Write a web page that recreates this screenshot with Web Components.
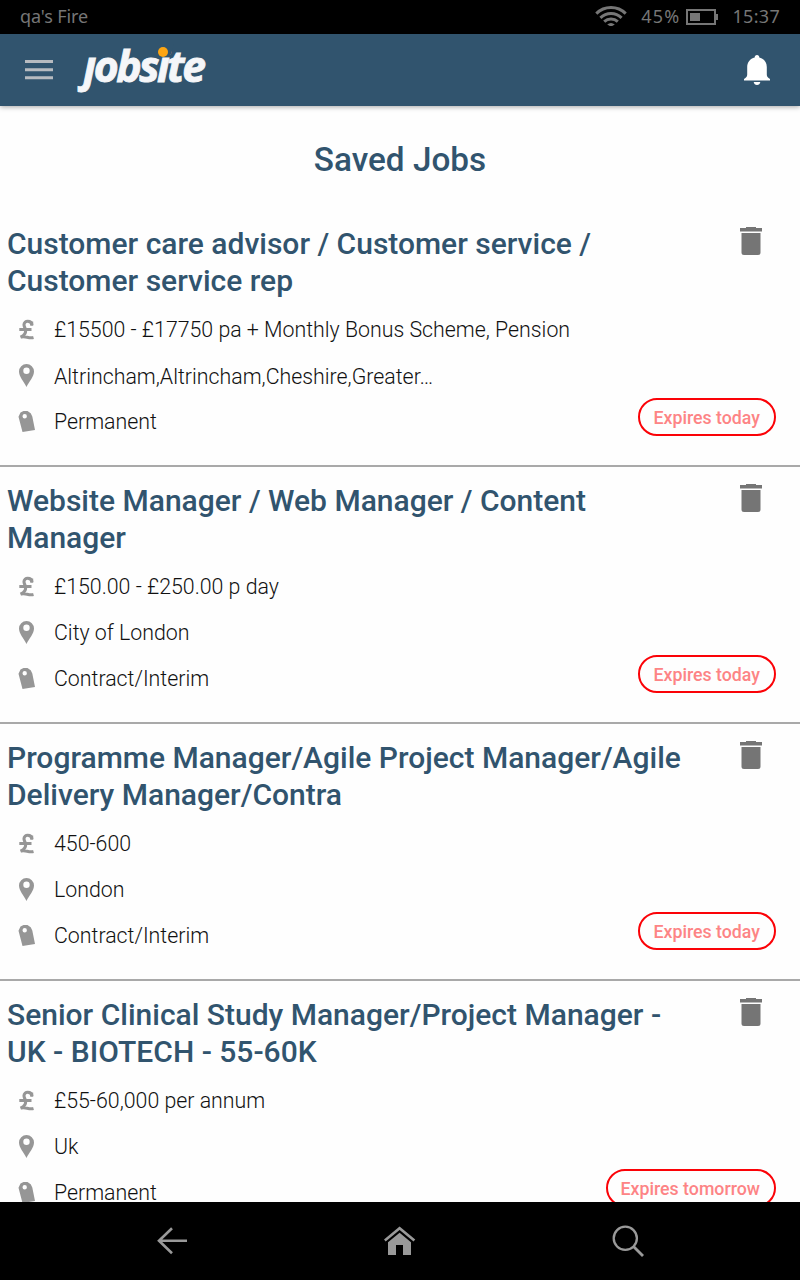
<!DOCTYPE html>
<html lang="en">
<head>
<meta charset="utf-8">
<title>Saved Jobs</title>
<style>
  html, body {
    margin: 0;
    height: 100%;
    overflow: hidden;
  }
  body {
    font-family: Roboto, "Liberation Sans", sans-serif;
    background: #fefefe;
    --brand: #31546e;
  }
</style>
</head>
<body>
<saved-jobs-app></saved-jobs-app>

<script>
class StatusBar extends HTMLElement {

  constructor () {
    super()
    this.shadow = this.attachShadow({ mode: 'open' })
  }

  connectedCallback () {
    this.render()
  }

  render () {
    this.shadow.innerHTML =
    /*html*/`
    <style>
      :host {
        display: flex;
        align-items: center;
        box-sizing: border-box;
        height: 34px;
        padding: 0 20px 2px 20px;
        background: #000;
        color: #767676;
        font: 18px/30px "Noto Sans", sans-serif;
      }
      .device { flex: 1; letter-spacing: -.1px; }
      .level { letter-spacing: 1.2px; }
      .clock { letter-spacing: .3px; }
      .battery { margin: 2px 14px 0 6px; }
      .wifi { margin-right: 14px; }
      svg { display: block; }
    </style>
    <span class="device"><slot></slot></span>
    <svg class="wifi" width="32" height="20" viewBox="0 0 32 20" fill="none" stroke="#767676" stroke-width="3">
      <path d="M1.3 7.6a21 21 0 0 1 29.4 0M5.4 11.8a15.3 15.3 0 0 1 21.2 0M9.200 15.700a10 10 0 0 1 13.6 0"/>
      <path d="M12.200 18.500q3.800-3 7.600 0L17.200 20h-2.400z" fill="#767676" stroke="none"/>
    </svg>
    <span class="level">45%</span>
    <svg class="battery" width="32" height="16" viewBox="0 0 32 16">
      <path d="M1 1h28v14H1z" fill="none" stroke="#767676" stroke-width="2"/>
      <path d="M4 4h10v8H4zM30 5h2v6h-2z" fill="#767676"/>
    </svg>
    <span class="clock">15:37</span>
    `
  }
}

class AppHeader extends HTMLElement {

  constructor () {
    super()
    this.shadow = this.attachShadow({ mode: 'open' })
  }

  connectedCallback () {
    this.render()
  }

  render () {
    this.shadow.innerHTML =
    /*html*/`
    <style>
      :host {
        display: flex;
        align-items: center;
        box-sizing: border-box;
        height: 72px;
        padding: 0 30px 0 25px;
        background: var(--brand);
        box-shadow: 0 1px 5px rgba(0, 0, 0, .35);
        z-index: 1;
      }
      svg { display: block; }
      .logo { margin-left: 17px; flex: none; }
      .logo text {
        font: italic 700 43px "Open Sans", "Noto Sans", sans-serif;
        letter-spacing: -2.5px;
      }
      .bell { margin-left: auto; }
    </style>
    <svg width="28" height="20" viewBox="0 0 28 20">
      <path d="M0 0h28v3H0zM0 8.3h28v3H0zM0 16.3h28v3H0z" fill="#b7bbc0"/>
    </svg>
    <svg class="logo" width="145" height="72" viewBox="70 34 145 72">
      <text x="83.500" y="81.700" fill="#f5f6f9" stroke="#f5f6f9" stroke-width=".9" textLength="120" lengthAdjust="spacingAndGlyphs">jobsite</text>
      <!-- the j has no dot, the i has an orange one -->
      <path d="M86 44h21v12.500H86zM156 44h18l-2.500 8.500L170 56h-14z" fill="#31546e"/>
      <circle cx="163" cy="52" r="5" fill="#fda512"/>
    </svg>
    <svg class="bell" width="26" height="30" viewBox="0 0 26 30" fill="#fff">
      <path d="M13 0c1.500 0 2.300 1 2.300 2.500 4.700 1.200 7.500 5 7.500 9.500v7.500c0 2 1 3.300 3.200 4.500v1.600H0V24c2.200-1.200 3.200-2.500 3.200-4.500V12c0-4.500 2.800-8.300 7.500-9.500C10.700 1 11.500 0 13 0z"/>
      <path d="M9.700 27h6.600c-.3 1.900-1.500 3-3.300 3s-3-1.100-3.300-3z"/>
    </svg>
    `
  }
}

class JobDetail extends HTMLElement {

  constructor () {
    super()
    this.shadow = this.attachShadow({ mode: 'open' })
    this.icons = {
      salary: '<path d="M13 7C12.300 2 5 2 5 6.800c0 2.600 3 5.400 1 8.700-1 1.900-2.200 2.800-4.500 3.700 4.600-2 8 1.600 13 .2M.3 11.500h12.200" fill="none" stroke="#969696" stroke-width="3.100"/><path d="M11.300 3.500h2.900v4.200h-2.900z"/>',
      location: '<path fill-rule="evenodd" d="M7.500 0A7.500 7.500 0 0 0 0 7.500C0 12.500 4.500 17 7.500 23c3-6 7.500-10.500 7.500-15.500A7.500 7.500 0 0 0 7.500 0zm0 3.500a3.200 3.200 0 1 1 0 6.400 3.200 3.200 0 0 1 0-6.400z"/>',
      type: '<path fill-rule="evenodd" d="M-.5 6.700 1.500 2.500 4.500 1.100 8.500 1l3.200 2.200 1.600 3.300L16 20 3.500 22zM5.700 4a2.200 2.200 0 1 0 0 4.400 2.200 2.200 0 0 0 0-4.400z"/>'
    }
  }

  connectedCallback () {
    this.render()
  }

  render () {
    this.shadow.innerHTML =
    /*html*/`
    <style>
      :host {
        display: grid;
        grid-template-columns: 16px 1fr;
        column-gap: 19px;
        align-items: start;
        height: 46px;
        padding-left: 12px;
        color: #111;
        font-size: 21.330px;
        font-weight: 300;
        line-height: 46px;
        white-space: nowrap;
      }
      :host([clipped]) span { margin-top: 1px; }
      svg { display: block; margin-top: 11px; fill: #969696; overflow: visible; }
    </style>
    <svg width="16" height="23" viewBox="0 0 16 23">${this.icons[this.getAttribute('icon')]}</svg>
    <span><slot></slot></span>
    `
  }
}

class ExpiryPill extends HTMLElement {

  constructor () {
    super()
    this.shadow = this.attachShadow({ mode: 'open' })
  }

  connectedCallback () {
    this.render()
  }

  render () {
    this.shadow.innerHTML =
    /*html*/`
    <style>
      :host {
        display: block;
        box-sizing: border-box;
        height: 38px;
        padding: 0 14px 0 13px;
        border: 2px solid #fb0207;
        border-radius: 19px;
        color: #fd8485;
        font-size: 17.750px;
        font-weight: 500;
        line-height: 36px;
        white-space: nowrap;
      }
    </style>
    <slot></slot>
    `
  }
}

class JobCard extends HTMLElement {

  constructor () {
    super()
    this.shadow = this.attachShadow({ mode: 'open' })
  }

  connectedCallback () {
    this.render()
  }

  render () {
    this.shadow.innerHTML =
    /*html*/`
    <style>
      :host {
        display: flex;
        justify-content: space-between;
        box-sizing: border-box;
        flex: none;
        height: 257px;
        padding: 15px 24px 0 7px;
        border-bottom: 2px solid #a9a9a9;
      }
      .info { width: 690px; }
      h2 {
        margin: 0 0 8px;
        height: 74px;
        color: var(--brand);
        font-size: 30px;
        font-weight: 500;
        line-height: 37px;
        white-space: pre-line;
      }
      .side {
        display: flex;
        flex-direction: column;
        justify-content: space-between;
        align-items: flex-end;
        width: 0;
        padding: 2px 0 29px;
      }
      .trash { display: block; flex: none; margin-right: 14px; }
    </style>
    <div class="info">
      <h2>${this.getAttribute('heading')}</h2>
      <slot></slot>
    </div>
    <div class="side">
      <svg class="trash" width="22" height="28" viewBox="0 0 22 28" fill="#757575">
        <path d="M0 1h6V0h10v1h6v3.500H0zM1.500 6h19v19.500q0 2.500-2.500 2.500H4q-2.500 0-2.500-2.500z"/>
      </svg>
      <slot name="expiry"></slot>
    </div>
    `
  }
}

class NavBar extends HTMLElement {

  constructor () {
    super()
    this.shadow = this.attachShadow({ mode: 'open' })
  }

  connectedCallback () {
    this.render()
  }

  render () {
    this.shadow.innerHTML =
    /*html*/`
    <style>
      :host {
        display: grid;
        grid-template-columns: repeat(3, 228px);
        justify-content: center;
        justify-items: center;
        align-items: center;
        height: 78px;
        background: #000;
      }
      svg { display: block; }
    </style>
    <svg width="32" height="32" viewBox="0 0 32 32" fill="none" stroke="#999" stroke-width="2.600">
      <path d="M31 15.700H3M16 3.200 3 15.700l13 12.500"/>
    </svg>
    <svg width="32" height="32" viewBox="0 0 32 32">
      <path d="M.8 15.500 15.600 3.200l14.800 12.300" fill="none" stroke="#999" stroke-width="2.700"/>
      <path d="M4 17.200 15.600 7.800 27 17.200V30h-8V20h-7v10H4z" fill="#999"/>
    </svg>
    <svg width="32" height="32" viewBox="0 0 32 32" fill="none" stroke="#999" stroke-width="2.300">
      <circle cx="13.300" cy="13.300" r="11.600"/>
      <path d="m21.500 21.500 9.500 9.500" stroke-width="2.800"/>
    </svg>
    `
  }
}

class SavedJobsApp extends HTMLElement {

  constructor () {
    super()
    this.shadow = this.attachShadow({ mode: 'open' })
  }

  connectedCallback () {
    this.render()
  }

  render () {
    this.shadow.innerHTML =
    /*html*/`
    <style>
      :host {
        display: flex;
        flex-direction: column;
        width: 800px;
        height: 1280px;
        overflow: hidden;
      }
      status-bar, app-header, nav-bar { flex: none; }
      main {
        display: flex;
        flex-direction: column;
        flex: 1;
        min-height: 0;
        overflow: hidden;
      }
      h1 {
        flex: none;
        margin: 0;
        height: 104px;
        color: var(--brand);
        font-size: 33.300px;
        font-weight: 500;
        line-height: 107px;
        text-align: center;
      }
    </style>
    <status-bar>qa's Fire</status-bar>
    <app-header></app-header>
    <main>
      <h1>Saved Jobs</h1>
      <job-card heading="Customer care advisor / Customer service /&#10;Customer service rep">
        <job-detail icon="salary">£15500 - £17750 pa + Monthly Bonus Scheme, Pension</job-detail>
        <job-detail icon="location" clipped>Altrincham,Altrincham,Cheshire,Greater…</job-detail>
        <job-detail icon="type">Permanent</job-detail>
        <expiry-pill slot="expiry">Expires today</expiry-pill>
      </job-card>
      <job-card heading="Website Manager / Web Manager / Content&#10;Manager">
        <job-detail icon="salary">£150.00 - £250.00 p day</job-detail>
        <job-detail icon="location">City of London</job-detail>
        <job-detail icon="type">Contract/Interim</job-detail>
        <expiry-pill slot="expiry">Expires today</expiry-pill>
      </job-card>
      <job-card heading="Programme Manager/Agile Project Manager/Agile&#10;Delivery Manager/Contra">
        <job-detail icon="salary">450-600</job-detail>
        <job-detail icon="location">London</job-detail>
        <job-detail icon="type">Contract/Interim</job-detail>
        <expiry-pill slot="expiry">Expires today</expiry-pill>
      </job-card>
      <job-card heading="Senior Clinical Study Manager/Project Manager -&#10;UK - BIOTECH - 55-60K">
        <job-detail icon="salary">£55-60,000 per annum</job-detail>
        <job-detail icon="location">Uk</job-detail>
        <job-detail icon="type">Permanent</job-detail>
        <expiry-pill slot="expiry">Expires tomorrow</expiry-pill>
      </job-card>
    </main>
    <nav-bar></nav-bar>
    `
  }
}

customElements.define('status-bar', StatusBar);
customElements.define('app-header', AppHeader);
customElements.define('job-detail', JobDetail);
customElements.define('expiry-pill', ExpiryPill);
customElements.define('job-card', JobCard);
customElements.define('nav-bar', NavBar);
customElements.define('saved-jobs-app', SavedJobsApp);
</script>
</body>
</html>
